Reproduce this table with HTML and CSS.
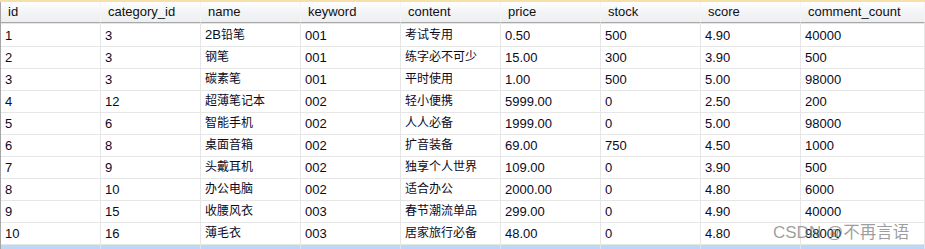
FILE: index.html
```html
<!DOCTYPE html>
<html>
<head>
<meta charset="utf-8">
<link rel="stylesheet" href="styles.css">
</head>
<body>
<div class="frame">
  <div class="topbar"></div>
  <table class="grid">
    <colgroup>
      <col class="c1"><col class="c"><col class="c"><col class="c"><col class="c"><col class="c"><col class="c"><col class="c"><col class="clast">
    </colgroup>
    <thead>
      <tr><th>id</th><th>category_id</th><th>name</th><th>keyword</th><th>content</th><th>price</th><th>stock</th><th>score</th><th>comment_count</th></tr>
    </thead>
    <tbody>
      <tr><td>1</td><td>3</td><td>2B<span class="zh">铅笔</span></td><td>001</td><td class="zh">考试专用</td><td>0.50</td><td>500</td><td>4.90</td><td>40000</td></tr>
      <tr><td>2</td><td>3</td><td class="zh">钢笔</td><td>001</td><td class="zh">练字必不可少</td><td>15.00</td><td>300</td><td>3.90</td><td>500</td></tr>
      <tr><td>3</td><td>3</td><td class="zh">碳素笔</td><td>001</td><td class="zh">平时使用</td><td>1.00</td><td>500</td><td>5.00</td><td>98000</td></tr>
      <tr><td>4</td><td>12</td><td class="zh">超薄笔记本</td><td>002</td><td class="zh">轻小便携</td><td>5999.00</td><td>0</td><td>2.50</td><td>200</td></tr>
      <tr><td>5</td><td>6</td><td class="zh">智能手机</td><td>002</td><td class="zh">人人必备</td><td>1999.00</td><td>0</td><td>5.00</td><td>98000</td></tr>
      <tr><td>6</td><td>8</td><td class="zh">桌面音箱</td><td>002</td><td class="zh">扩音装备</td><td>69.00</td><td>750</td><td>4.50</td><td>1000</td></tr>
      <tr><td>7</td><td>9</td><td class="zh">头戴耳机</td><td>002</td><td class="zh">独享个人世界</td><td>109.00</td><td>0</td><td>3.90</td><td>500</td></tr>
      <tr><td>8</td><td>10</td><td class="zh">办公电脑</td><td>002</td><td class="zh">适合办公</td><td>2000.00</td><td>0</td><td>4.80</td><td>6000</td></tr>
      <tr><td>9</td><td>15</td><td class="zh">收腰风衣</td><td>003</td><td class="zh">春节潮流单品</td><td>299.00</td><td>0</td><td>4.90</td><td>40000</td></tr>
      <tr><td>10</td><td>16</td><td class="zh">薄毛衣</td><td>003</td><td class="zh">居家旅行必备</td><td>48.00</td><td>0</td><td>4.80</td><td>98000</td></tr>
      <tr class="sel"><td></td><td></td><td></td><td></td><td></td><td></td><td></td><td></td><td></td></tr>
    </tbody>
  </table>
  <div class="watermark">CSDN @<span class="wzh">不再言语</span></div>
</div>
</body>
</html>
```

FILE: styles.css
```css
html, body {
  margin: 0;
  padding: 0;
  background: #ffffff;
}
.frame {
  position: relative;
  width: 925px;
  height: 249px;
  overflow: hidden;
  font-family: "Liberation Sans", "Noto Sans CJK SC", sans-serif;
  font-size: 13px;
  color: #0a0a1e;
}
.topbar {
  height: 2px;
  background: #f7dfa9;
}
.grid {
  border-collapse: separate;
  border-spacing: 0;
  table-layout: fixed;
  width: 925px;
  border-left: 1px solid #a6a6a6;
}
.c1 { width: 100px; }
.c { width: 100px; }
.clast { width: 124px; }
.grid th {
  height: 20px;
  padding: 0 0 0 7px;
  text-align: left;
  font-weight: normal;
  color: #101010;
  background: linear-gradient(#ffffff, #f3f4f6 50%, #eceef1);
  border-right: 1px solid #f4f4f4;
  border-bottom: 1px solid #a8a8a8;
  box-shadow: 0 1px 0 #dedede;
  white-space: nowrap;
  line-height: 20px;
}
.grid td {
  height: 21px;
  padding: 0 0 0 4px;
  border-right: 1px solid #e6e6e6;
  border-bottom: 1px solid #e6e6e6;
  white-space: nowrap;
  line-height: 21px;
  overflow: hidden;
}
.grid tbody tr:first-child td {
  border-top: 1px solid #e6e6e6;
}
.zh {
  font-size: 12px;
}
.grid tr.sel td {
  background: #bad8f8;
  border-right: 1px solid #d4e6fb;
}
.watermark {
  position: absolute;
  left: 773px;
  top: 221px;
  font-size: 17px;
  line-height: 22px;
  color: rgba(120, 120, 120, 0.72);
  white-space: nowrap;
}
.wzh {
  font-size: 16.5px;
}
```
